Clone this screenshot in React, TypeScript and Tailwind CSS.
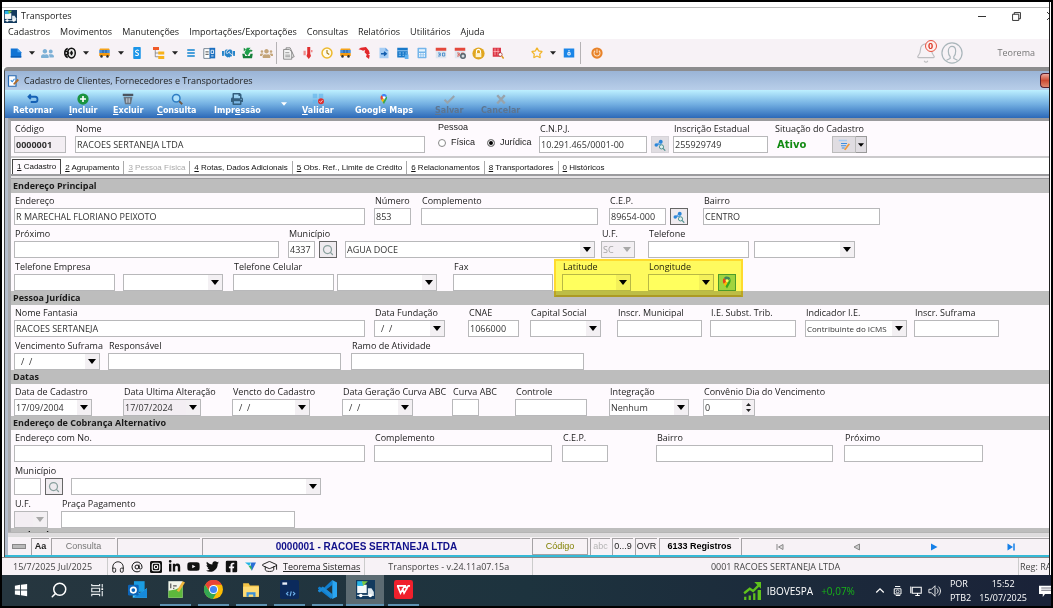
import React from 'react';
import { AtSign, Bell, GraduationCap, Headphones, Search, Star } from 'lucide-react';
import { FaFacebookSquare, FaHandshake, FaInstagram, FaLinkedinIn, FaPrint, FaTwitter, FaUserFriends, FaUsers, FaYoutube } from 'react-icons/fa';
import { clsx } from 'clsx';

type Kids = { children?: React.ReactNode };

/* ---------- shared icons ---------- */

const Arrow = ({ size = 'w-2 h-[5px]', className = 'text-black' }: { size?: string; className?: string }) => (
  <svg viewBox="0 0 10 6" className={clsx('shrink-0', size, className)} fill="currentColor">
    <path d="M0 0h10L5 6z" />
  </svg>
);

const Svg = ({ children, className = 'w-3 h-3' }: Kids & { className?: string }) => (
  <svg viewBox="0 0 16 16" className={clsx('shrink-0', className)} fill="none">
    {children}
  </svg>
);

const DocIcon = () => (
  <Svg>
    <path d="M1 2h9l5 5v7H1z" fill="#1173d4" />
    <path d="M10 2v5h5z" fill="#4da6f5" />
    <path d="M1 12h14v2H1z" fill="#0a5cb5" />
  </Svg>
);

const TireIcon = () => (
  <Svg>
    <ellipse cx="10" cy="8" rx="5" ry="6.5" fill="#eee" stroke="#111" strokeWidth="2" />
    <path d="M5 2C2 3 1 6 1 8s1 5 4 6M1.5 6h4M1.5 10h4M10 5v6M5 8h2" stroke="#111" strokeWidth="2" />
    <circle cx="10" cy="8" r="1.8" fill="#111" />
  </Svg>
);

const BusIcon = () => (
  <Svg className="w-[13px] h-3">
    <path d="M1 4h14v4H1z" fill="#4b8fd8" />
    <path d="M2 2h12l1 2H1z" fill="#f5a31b" />
    <path d="M1 8h14v4H1z" fill="#f39a12" />
    <path d="M6 4v4M10 4v4" stroke="#244d78" />
    <circle cx="4" cy="12.5" r="1.7" fill="#333" />
    <circle cx="12" cy="12.5" r="1.7" fill="#333" />
  </Svg>
);

const PhoneIcon = () => (
  <Svg>
    <rect x="3" y="0" width="10" height="16" rx="1" fill="#1b95e8" />
    <path d="M10.500 5C9 3.500 6 4 6 6s4 1.500 4 3.500S7 12 5.500 10.500" stroke="#fff" strokeWidth="1.400" />
  </Svg>
);

const TreeIcon = () => (
  <Svg>
    <path d="M3 4v9h6M3 8h6" stroke="#777" />
    <rect x="0" y="0" width="8" height="4" fill="#f05a28" />
    <rect x="7" y="6" width="8" height="4" fill="#f7b21b" />
    <rect x="7" y="12" width="8" height="4" fill="#f7b21b" />
  </Svg>
);

const ListIcon = () => (
  <Svg>
    <path d="M3 4h10M3 8h10M3 12h10" stroke="#1184d1" strokeWidth="2" />
  </Svg>
);

const ReportIcon = () => (
  <Svg className="w-[13px] h-[13px]">
    <path d="M1 2h8v12H1z" fill="#fff" stroke="#5c6f80" />
    <path d="M8 1h7v13H8z" fill="#1c6fc0" />
    <path d="M3 6h4M3 9h4" stroke="#222" />
    <path d="M10 4h3v4h-3zM10 11h3" stroke="#fff" />
  </Svg>
);

const TrayIcon = () => (
  <Svg className="w-[13px] h-3">
    <path d="M1 9h3l1 3h6l1-3h3l-1 6H2z" fill="#15803a" />
    <path d="M4 8 7 1h5l-2 3h3l-5 8z" fill="#1fa04b" />
    <path d="m3 1 3 2-3 3zM12 3l3 2-3 2z" fill="#1b8a3f" />
  </Svg>
);

const PaperIcon = () => (
  <Svg className="w-[13px] h-[13px]">
    <path d="M2 3h7l3 3v9H2zM5 3V1h5l5 11-3 1" fill="#f4f4f4" stroke="#777" />
    <path d="M4 7h5M4 10h6M4 12h6" stroke="#888" />
  </Svg>
);

const ThermoIcon = () => (
  <Svg>
    <path d="M7 0h4v9l1 3-3 4-3-4 1-3z" fill="#e02f2f" />
    <path d="M2 5h3v6H2zM12 4h2v3h-2z" fill="#f08a8a" />
  </Svg>
);

const ClockIcon = () => (
  <Svg>
    <circle cx="8" cy="8" r="6.600" fill="#fffbea" stroke="#edb92e" strokeWidth="2" />
    <path d="M8 4v4l3 2" stroke="#a67c10" strokeWidth="1.500" />
  </Svg>
);

const FuelIcon = () => (
  <Svg className="w-[13px] h-3">
    <path d="M0 3 3 1l7-1 4 5 1 4-3 2-4-4 1-3-3 1-2-1z" fill="#e2272b" />
    <path d="m11 10 4 1-1 5-4-3z" fill="#e2272b" />
  </Svg>
);

const PageArrowIcon = () => (
  <Svg>
    <path d="M2 1h8l4 4v10H2z" fill="#a6cdf4" />
    <path d="M10 1v4h4z" fill="#5d9de0" />
    <path d="M4 9h6M8 6.500 11 9l-3 2.500" stroke="#145fb0" strokeWidth="1.800" />
  </Svg>
);

const TableIcon = () => (
  <Svg className="w-[13px] h-3">
    <path d="M1 1h14v13H1z" fill="#1979c9" />
    <path d="M1 5h14M3 8h3M8 8h2M12 8h2M3 11h3M8 11h2" stroke="#bde0ff" />
    <path d="M11 10h5v6h-5z" fill="#5db0f0" />
  </Svg>
);

const CalcIcon = () => (
  <Svg>
    <rect x="2" y="1" width="12" height="14" rx="1" fill="#75b5ea" />
    <path d="M4 3h8v3H4z" fill="#e5f4ff" />
    <path d="M4 9h8M4 12h8" stroke="#fff" strokeWidth="1.800" strokeDasharray="2 1" />
  </Svg>
);

const CalendarIcon = ({ gear = false }: { gear?: boolean }) => (
  <Svg>
    <path d="M1 2h14v13H1z" fill="#dfe6ef" />
    <path d="M1 1h14v4H1z" fill="#e4483c" />
    <path d="M4 8h3v2H5m2 0v2H4M10 8h3v4h-3z" stroke={gear ? '#d0453a' : '#2878c0'} />
    {gear && <circle cx="12" cy="12" r="3" fill="#d5dde3" stroke="#56646e" strokeWidth="2" />}
  </Svg>
);

const LockIcon = () => (
  <Svg className="w-[13px] h-[13px]">
    <circle cx="8" cy="8" r="7.500" fill="#e0a620" />
    <path d="M5.500 8V5.500a2.500 2.500 0 0 1 5 0V8" stroke="#fff" strokeWidth="1.400" />
    <path d="M4.500 7.500h7v5h-7z" fill="#fff3cc" />
  </Svg>
);

const BookSearchIcon = () => (
  <Svg>
    <path d="M1 1h11v12H1z" fill="#dc3545" />
    <path d="M4 2v9M8 2v9M2 6h8" stroke="#ffb9be" />
    <circle cx="11" cy="10" r="2.500" fill="#fff" stroke="#a02b2b" />
    <path d="m13 12 2.500 3.500" stroke="#e09a23" strokeWidth="2" />
  </Svg>
);

const ContactIcon = () => (
  <Svg>
    <path d="M1 2h14v12H1z" fill="#1b86e8" />
    <path d="M8 4v2M6.500 7.500h3v3h-3z" stroke="#fff" strokeWidth="1.300" />
  </Svg>
);

const PowerIcon = () => (
  <Svg>
    <circle cx="8" cy="8" r="7.500" fill="#e8832a" />
    <path d="M5.500 5a4 4 0 1 0 5 0M8 3v5" stroke="#fbe0c4" strokeWidth="1.400" />
  </Svg>
);

const UserCircle = () => (
  <svg viewBox="0 0 24 24" className="w-[22px] h-[22px]" fill="none" stroke="#a9b5ba" strokeWidth="1.300">
    <circle cx="12" cy="12" r="11" />
    <path d="M8 10c0-7 8-7 8 0 0 3-1 5-2 6v2l4 2M8 10c0 3 1 5 2 6v2l-4 2" />
  </svg>
);

const TruckLogo = ({ className }: { className: string }) => (
  <Svg className={className}>
    <path d="M0 0h16v16H0z" fill="#123a5e" />
    <path d="M1 4h8v7H1z" fill="#f4f8fa" />
    <path d="M1 1h5v4H1z" fill="#27b5e8" />
    <path d="M5 1h5L6 5z" fill="#7ac943" />
    <path d="M10 7h3l2 3v3h-5z" fill="#dfe9ef" />
    <path d="M1 13h14" stroke="#cfdce4" />
    <circle cx="4" cy="13" r="1.500" fill="#fff" />
    <circle cx="12" cy="13" r="1.500" fill="#fff" />
  </Svg>
);

const MapsPin = ({ className = 'w-[10px] h-[12px]' }: { className?: string }) => (
  <Svg className={className}>
    <path d="M8 16 3.500 9.500 8 6z" fill="#fbbc04" />
    <path d="M3.500 9.500C2 7 2 4 4 2l4 4z" fill="#ea4335" />
    <path d="M4 2c2-3 7-2.500 8.500 1L8 6z" fill="#4285f4" />
    <path d="M12.500 3c1 3 0 5-1 6.500L8 16l-2-3z" fill="#34a853" />
    <circle cx="8" cy="5.500" r="1.900" fill="#fff" />
  </Svg>
);

const LookupIcon = () => (
  <Svg>
    <path d="M3 8l6-1 1-4M3 8l4-3" stroke="#5aa4e4" strokeWidth="1.600" />
    <circle cx="3" cy="8" r="2.300" fill="#2b86d9" />
    <circle cx="9" cy="3.500" r="2.600" fill="#2b86d9" />
    <circle cx="10" cy="10.500" r="2.800" stroke="#4d8f8d" strokeWidth="1.300" fill="#dff0f0" />
    <path d="m12 12.500 3 3" stroke="#4d8f8d" strokeWidth="1.600" />
  </Svg>
);

/* ---------- form controls ---------- */

interface FieldProps {
  id: string;
  label?: string;
  value?: string;
  w: string;
  kind?: 'text' | 'select' | 'date' | 'spin';
  muted?: boolean;
  disabled?: boolean;
  children?: React.ReactNode;
}

function Control({ id, label, value = '', w, kind = 'text', muted, disabled }: FieldProps) {
  const box = clsx('flex h-[17px] border border-[#b8b8ba]', w, muted || disabled ? 'bg-[#f3eef3]' : 'bg-white');
  const text = clsx('min-w-0 flex-1 bg-transparent outline-none leading-[15px]', disabled ? 'text-[#a5a5a5]' : 'text-[#333]');
  const name = label ?? id;

  if (kind === 'select') {
    return (
      <div className={clsx(box, 'relative')}>
        <select id={id} aria-label={name} disabled={disabled} defaultValue={value} className={clsx(text, 'appearance-none pl-px pr-4 opacity-100')}>
          <option>{value}</option>
        </select>
        <span className="pointer-events-none absolute inset-y-0 right-0 w-[14px] flex items-center justify-center bg-[#f3f0f3]">
          <Arrow className={disabled ? 'text-[#a8a8a8]' : 'text-black'} />
        </span>
      </div>
    );
  }
  if (kind === 'date') {
    return (
      <div className={box}>
        <input id={id} aria-label={name} defaultValue={value} className={clsx(text, value.startsWith('/') ? 'pl-1.5' : 'pl-px')} />
        <button aria-label={`Abrir ${name}`} className="w-[14px] flex items-center justify-center bg-[#f3f0f3]">
          <Arrow />
        </button>
      </div>
    );
  }
  if (kind === 'spin') {
    return (
      <div className={box}>
        <input id={id} aria-label={name} defaultValue={value} className={clsx(text, 'pl-px')} />
        <div className="w-3 flex flex-col items-center justify-evenly bg-[#f3f0f3]">
          <button aria-label="Aumentar"><Arrow size="w-[5px] h-[3px]" className="rotate-180 text-[#222]" /></button>
          <button aria-label="Diminuir"><Arrow size="w-[5px] h-[3px]" className="text-[#222]" /></button>
        </div>
      </div>
    );
  }
  return (
    <div className={box}>
      <input id={id} aria-label={name} defaultValue={value} className={clsx(text, 'pl-px')} />
    </div>
  );
}

function Field(props: FieldProps) {
  return (
    <div className="relative">
      <label htmlFor={props.id} className="block h-[15px] leading-[15px] pl-px whitespace-nowrap">
        {props.label}
      </label>
      <Control {...props} />
      {props.children}
    </div>
  );
}

const IconButton = ({ label, tone = 'light', children }: Kids & { label: string; tone?: 'light' | 'dark' | 'map' }) => (
  <div className="pt-[15px]">
    <button
      aria-label={label}
      className={clsx(
        'w-[18px] h-[17px] flex items-center justify-center border',
        tone === 'light' && 'border-[#d6d3d8] bg-[#e0dde2]',
        tone === 'dark' && 'border-[#666] bg-[#efebef]',
        tone === 'map' && 'border-[#4c9c70] bg-[#a0d4a8]',
      )}
    >
      {children}
    </button>
  </div>
);

const Magnifier = () => <Search className="w-3 h-3 text-[#8aa09e]" strokeWidth={2.5} />;

const SectionBar = ({ children }: Kids) => (
  <h2 className="h-[14px] leading-[14px] pl-0.5 bg-[#bdbdbd] font-bold text-[#1a1a1a] whitespace-nowrap">{children}</h2>
);

const Rows = ({ children }: Kids) => <div className="flex flex-col gap-px pl-[3px]">{children}</div>;

/* ---------- application chrome ---------- */

const ToolCell = ({ label, children }: Kids & { label: string }) => (
  <button aria-label={label} className="w-[19px] h-5 shrink-0 flex items-center justify-center">{children}</button>
);

const ToolDrop = () => (
  <button aria-label="Mais opções" className="w-[13px] h-5 shrink-0 flex items-center justify-center">
    <Arrow size="w-[6px] h-[4px]" className="text-[#222]" />
  </button>
);

const ToolSep = () => <span className="w-px h-[22px] bg-[#b5b2b5] shrink-0" />;

function MainToolbar() {
  return (
    <div className="h-7 flex items-center bg-[#f7f2f6] pl-1 text-[13px]">
      <div className="flex gap-[3px]">
        <div className="flex">
          <ToolCell label="Documento"><DocIcon /></ToolCell>
          <ToolDrop />
          <ToolCell label="Clientes"><FaUserFriends className="text-[#7db0d6]" /></ToolCell>
        </div>
        <div className="flex">
          <ToolCell label="Pneus"><TireIcon /></ToolCell>
          <ToolDrop />
        </div>
        <div className="flex">
          <ToolCell label="Veículos"><BusIcon /></ToolCell>
          <ToolDrop />
          <ToolCell label="Financeiro"><PhoneIcon /></ToolCell>
        </div>
        <div className="flex">
          <ToolCell label="Plano"><TreeIcon /></ToolCell>
          <ToolDrop />
          <ToolCell label="Lista"><ListIcon /></ToolCell>
          <ToolCell label="Razão"><ReportIcon /></ToolCell>
          <ToolCell label="Contratos"><FaHandshake className="text-[#2583c9]" /></ToolCell>
          <ToolCell label="Receber"><TrayIcon /></ToolCell>
          <ToolCell label="Equipe"><FaUsers className="text-[#c4a57a]" /></ToolCell>
        </div>
      </div>
      <ToolSep />
      <div className="flex pl-0.5">
        <ToolCell label="Nota"><PaperIcon /></ToolCell>
        <ToolCell label="Temperatura"><ThermoIcon /></ToolCell>
        <ToolCell label="Horários"><ClockIcon /></ToolCell>
        <ToolCell label="Frota"><BusIcon /></ToolCell>
        <ToolCell label="Abastecimento"><FuelIcon /></ToolCell>
        <ToolCell label="Exportar"><PageArrowIcon /></ToolCell>
        <ToolCell label="Tabela"><TableIcon /></ToolCell>
        <ToolCell label="Calculadora"><CalcIcon /></ToolCell>
        <ToolCell label="Calendário"><CalendarIcon /></ToolCell>
        <ToolCell label="Agenda"><CalendarIcon gear /></ToolCell>
        <ToolCell label="Bloqueio"><LockIcon /></ToolCell>
        <ToolCell label="Auditoria"><BookSearchIcon /></ToolCell>
      </div>
      <div className="flex ml-5 pr-0.5">
        <ToolCell label="Favoritos"><Star className="w-3 h-3 text-[#f2b52a]" strokeWidth={2.5} /></ToolCell>
        <ToolDrop />
        <ToolCell label="Contato"><ContactIcon /></ToolCell>
      </div>
      <ToolSep />
      <div className="ml-1.5"><ToolCell label="Sair"><PowerIcon /></ToolCell></div>
      <div className="ml-auto flex items-center pr-[14px] text-[9px] text-[#777]">
        <button aria-label="Notificações" className="relative mr-1">
          <Bell className="w-[22px] h-[22px] text-[#bdbdc0]" strokeWidth={1.3} />
          <span className="absolute -top-0.5 right-0 w-3 h-3 rounded-full border border-[#e8503f] bg-[#fdf0ee] text-[#dd3b2b] leading-[10px] font-bold">0</span>
        </button>
        <button aria-label="Usuário"><UserCircle /></button>
        <span className="ml-[35px]">Teorema</span>
      </div>
    </div>
  );
}

interface ActionProps {
  label: string;
  hot?: number;
  off?: boolean;
  icon: React.ReactNode;
}

function Action({ label, hot = -1, off, icon }: ActionProps) {
  return (
    <button disabled={off} className={clsx('justify-self-start flex flex-col items-center whitespace-nowrap', off ? 'text-[#5d7590]' : 'text-white')}>
      <span className="h-3 mt-[3px] flex items-center">{icon}</span>
      <span className="leading-[12px]">
        {hot < 0 ? label : (
          <>
            {label.slice(0, hot)}<u>{label[hot]}</u>{label.slice(hot + 1)}
          </>
        )}
      </span>
    </button>
  );
}

function ActionBar() {
  return (
    <div className="h-7 grid grid-cols-[56px_44px_44px_57px_61px_27px_53px_80px_46px_60px] pl-2 bg-linear-to-b from-[#bdf0ff] via-[#74b0e2] to-[#2c69b8] text-[8px] font-bold font-['DejaVu_Sans',sans-serif]">
      <Action label="Retornar" icon={<Svg><path d="M5 2 2 5l3 3M2 5h9c4 0 4 7 0 7H5" stroke="#1561b5" strokeWidth="2.400" /></Svg>} />
      <Action label="Incluir" hot={0} icon={<Svg><circle cx="8" cy="8" r="7.500" fill="#1a9440" /><path d="M8 4v8M4 8h8" stroke="#fff" strokeWidth="2.200" /></Svg>} />
      <Action label="Excluir" hot={0} icon={<Svg><path d="M1 1h14v3H1z" fill="#4b5560" /><path d="M2 5h12l-2 10H4z" fill="#6a7682" /><path d="M6 7v6M8 7v6M10 7v6" stroke="#c9d2da" /></Svg>} />
      <Action label="Consulta" hot={0} icon={<Svg><circle cx="7" cy="7" r="5" stroke="#2f7ec4" strokeWidth="2" fill="#aee0fb" /><path d="m11 11 4 4" stroke="#6e5a48" strokeWidth="2.400" /></Svg>} />
      <Action label="Impressão" hot={4} icon={<FaPrint className="text-[12px] text-[#35607f]" />} />
      <button aria-label="Opções de impressão" className="flex items-center pl-1.5"><Arrow size="w-[6px] h-[4px]" className="text-white" /></button>
      <Action label="Validar" hot={0} icon={<Svg><path d="M1 1h6v6H1zM9 1h6v6H9zM1 9h6v5H1z" fill="#5fb0ea" opacity=".6" /><circle cx="12" cy="11" r="4" fill="#dd3030" /><path d="m10 11 1.500 1.500L14 9.500" stroke="#fff" /></Svg>} />
      <Action label="Google Maps" icon={<MapsPin />} />
      <Action label="Salvar" hot={0} off icon={<Svg><path d="m2 9 4 4 9-9" stroke="#98a3ab" strokeWidth="2.800" /></Svg>} />
      <Action label="Cancelar" off icon={<Svg><path d="m3 3 10 11M13 3 3 14" stroke="#98a3ab" strokeWidth="3.200" /></Svg>} />
    </div>
  );
}

function RecordHeader() {
  return (
    <div className="h-[35px] grid grid-cols-[61px_363px_101px_112px_22px_102px_57px_40px] pl-[3px]">
      <Field id="codigo" label="Código" w="w-[52px] font-bold" value="0000001" muted />
      <Field id="nome" label="Nome" w="w-[350px]" value="RACOES SERTANEJA LTDA" />
      <fieldset className="font-['Liberation_Sans',sans-serif]">
        <legend className="h-3 leading-[12px]">Pessoa</legend>
        <div className="h-5 flex items-center gap-3">
          {['Física', 'Jurídica'].map((p) => (
            <label key={p} className="flex items-center gap-[5px]">
              <input
                type="radio"
                name="pessoa"
                defaultChecked={p === 'Jurídica'}
                className="appearance-none w-2 h-2 rounded-full border border-[#888] bg-white checked:bg-black checked:shadow-[inset_0_0_0_1px_white]"
              />
              {p}
            </label>
          ))}
        </div>
      </fieldset>
      <Field id="cnpj" label="C.N.P.J." w="w-[108px]" value="10.291.465/0001-00" />
      <IconButton label="Consultar CNPJ"><LookupIcon /></IconButton>
      <Field id="ie" label="Inscrição Estadual" w="w-[95px]" value="255929749" />
      <div>
        <div className="h-[15px] leading-[15px] whitespace-nowrap">Situação do Cadastro</div>
        <strong className="block pl-0.5 leading-[17px] text-[10px] text-[#128a12] font-['DejaVu_Sans',sans-serif]">Ativo</strong>
      </div>
      <div className="pt-[15px] flex">
        <button aria-label="Alterar situação" className="w-6 h-[17px] flex items-center justify-center border border-[#bbb] bg-[#e0dde2]">
          <Svg><path d="M1 2h11" stroke="#a9cdf2" strokeWidth="2" /><path d="M4 6h8M4 9h7M5 12h4" stroke="#3a8de0" strokeWidth="1.600" /><path d="m8 14 6-8 2 1-6 8z" fill="#f09a3a" /></Svg>
        </button>
        <button aria-label="Opções de situação" className="w-[11px] h-[17px] flex items-center justify-center border border-l-0 border-[#999] bg-[#e0dde2]">
          <Arrow size="w-[6px] h-[4px]" />
        </button>
      </div>
    </div>
  );
}

const TABS = [
  { key: '1', name: 'Cadastro' },
  { key: '2', name: 'Agrupamento' },
  { key: '3', name: 'Pessoa Física', off: true },
  { key: '4', name: 'Rotas, Dados Adicionais' },
  { key: '5', name: 'Obs. Ref., Limite de Crédito' },
  { key: '6', name: 'Relacionamentos' },
  { key: '8', name: 'Transportadores' },
  { key: '0', name: 'Históricos' },
];

function TabStrip() {
  return (
    <div role="tablist" className="h-[18px] flex items-end border-t-2 border-[#cbcacc] bg-white pl-px text-[8px] font-['Liberation_Sans',sans-serif] whitespace-nowrap">
      {TABS.map((t, i) => (
        <button
          key={t.key}
          role="tab"
          aria-selected={i === 0}
          disabled={t.off}
          className={clsx(
            'px-1',
            i === 0 ? 'h-[15px] border border-b-0 border-[#444] bg-[#fefafe]' : 'h-[13px]',
            i > 0 && i < TABS.length - 1 && 'border-r border-[#aaa]',
            t.off ? 'text-[#a9a9a9]' : 'text-[#111]',
          )}
        >
          <u>{t.key}</u> {t.name}
        </button>
      ))}
    </div>
  );
}

function FormBody() {
  return (
    <div className="flex-1 min-h-0 overflow-hidden">
      <SectionBar>Endereço Principal</SectionBar>
      <Rows>
        <div className="grid grid-cols-[360px_47px_188px_61px_33px_177px]">
          <Field id="endereco" label="Endereço" w="w-[351px]" value="R MARECHAL FLORIANO PEIXOTO" />
          <Field id="numero" label="Número" w="w-[37px]" value="853" />
          <Field id="complemento" label="Complemento" w="w-[177px]" />
          <Field id="cep" label="C.E.P." w="w-[57px]" value="89654-000" />
          <IconButton label="Consultar CEP" tone="dark"><LookupIcon /></IconButton>
          <Field id="bairro" label="Bairro" w="w-[177px]" value="CENTRO" />
        </div>
        <div className="grid grid-cols-[274px_31px_26px_256px_47px_106px_101px]">
          <Field id="proximo" label="Próximo" w="w-[265px]" />
          <Field id="municipio" label="Município" w="w-[27px]" value="4337" />
          <IconButton label="Pesquisar município" tone="dark"><Magnifier /></IconButton>
          <div className="pt-[15px]"><Control id="cidade" w="w-[250px]" kind="select" value="AGUA DOCE" /></div>
          <Field id="uf" label="U.F." w="w-[34px]" kind="select" value="SC" disabled />
          <Field id="telefone" label="Telefone" w="w-[101px]" />
          <div className="pt-[15px]"><Control id="tipo-telefone" w="w-[101px]" kind="select" /></div>
        </div>
        <div className="grid grid-cols-[109px_110px_104px_116px_109px_86px_70px_18px]">
          <Field id="tel-empresa" label="Telefone Empresa" w="w-[101px]" />
          <div className="pt-[15px]"><Control id="tipo-empresa" w="w-[100px]" kind="select" /></div>
          <Field id="tel-celular" label="Telefone Celular" w="w-[101px]" />
          <div className="pt-[15px]"><Control id="tipo-celular" w="w-[100px]" kind="select" /></div>
          <Field id="fax" label="Fax" w="w-[100px]" />
          <Field id="latitude" label="Latitude" w="w-[69px]" kind="date">
            {/* marker laid over the coordinates block */}
            <span className="pointer-events-none absolute z-10 -left-2 top-0 w-[189px] h-[38px] bg-[#ffff5e] border-2 border-[#ffe02e] border-b-[#e8d030] mix-blend-multiply" />
          </Field>
          <Field id="longitude" label="Longitude" w="w-[66px]" kind="date" />
          <IconButton label="Abrir no mapa" tone="map"><MapsPin className="w-3 h-[13px]" /></IconButton>
        </div>
      </Rows>

      <SectionBar>Pessoa Jurídica</SectionBar>
      <Rows>
        <div className="grid grid-cols-[360px_94px_62px_87px_93px_95px_109px_85px]">
          <Field id="fantasia" label="Nome Fantasia" w="w-[351px]" value="RACOES SERTANEJA" />
          <Field id="fundacao" label="Data Fundação" w="w-[71px]" kind="date" value="/  /" />
          <Field id="cnae" label="CNAE" w="w-[51px]" value="1066000" />
          <Field id="capital" label="Capital Social" w="w-[71px]" kind="date" />
          <Field id="insc-municipal" label="Inscr. Municipal" w="w-[85px]" />
          <Field id="ie-subst" label="I.E. Subst. Trib." w="w-[86px]" />
          <Field id="indicador" label="Indicador I.E." w="w-[102px] text-[8px]" kind="select" value="Contribuinte do ICMS" />
          <Field id="suframa" label="Inscr. Suframa" w="w-[85px]" />
        </div>
        <div className="grid grid-cols-[94px_243px_233px]">
          <Field id="venc-suframa" label="Vencimento Suframa" w="w-[86px]" kind="date" value="/  /" />
          <Field id="responsavel" label="Responsável" w="w-[233px]" />
          <Field id="ramo" label="Ramo de Atividade" w="w-[233px]" />
        </div>
      </Rows>

      <SectionBar>Datas</SectionBar>
      <Rows>
        <div className="grid grid-cols-[109px_109px_110px_110px_63px_94px_94px_52px]">
          <Field id="dt-cadastro" label="Data de Cadastro" w="w-[78px]" kind="date" value="17/09/2004" />
          <Field id="dt-alteracao" label="Data Ultima Alteração" w="w-[78px]" kind="date" value="17/07/2024" muted />
          <Field id="vencto" label="Vencto do Cadastro" w="w-[78px]" kind="date" value="/  /" />
          <Field id="dt-curva" label="Data Geração Curva ABC" w="w-[71px]" kind="date" value="/  /" />
          <Field id="curva" label="Curva ABC" w="w-[27px]" />
          <Field id="controle" label="Controle" w="w-[72px]" />
          <Field id="integracao" label="Integração" w="w-[80px]" kind="select" value="Nenhum" />
          <Field id="convenio" label="Convênio Dia do Vencimento" w="w-[52px]" kind="spin" value="0" />
        </div>
      </Rows>

      <SectionBar>Endereço de Cobrança Alternativo</SectionBar>
      <Rows>
        <div className="grid grid-cols-[360px_188px_94px_188px_139px]">
          <Field id="cob-endereco" label="Endereço com No." w="w-[351px]" />
          <Field id="cob-complemento" label="Complemento" w="w-[178px]" />
          <Field id="cob-cep" label="C.E.P." w="w-[46px]" />
          <Field id="cob-bairro" label="Bairro" w="w-[177px]" />
          <Field id="cob-proximo" label="Próximo" w="w-[139px]" />
        </div>
        <div className="grid grid-cols-[31px_26px_250px]">
          <Field id="cob-municipio" label="Município" w="w-[27px]" />
          <IconButton label="Pesquisar município de cobrança" tone="dark"><Magnifier /></IconButton>
          <div className="pt-[15px]"><Control id="cob-cidade" w="w-[250px]" kind="select" /></div>
        </div>
        <div className="grid grid-cols-[47px_234px]">
          <Field id="cob-uf" label="U.F." w="w-[34px]" kind="select" disabled />
          <Field id="praca" label="Praça Pagamento" w="w-[234px]" />
        </div>
      </Rows>
      <SectionBar>Dados do Contato</SectionBar>
    </div>
  );
}

const StatusCell = ({ className, children }: Kids & { className: string }) => (
  <div className={clsx('h-[17px] leading-[15px] border-t border-l border-[#a5a2a5] text-center whitespace-nowrap overflow-hidden', className)}>
    {children}
  </div>
);

function RecordStatus() {
  return (
    <div className="h-[19px] flex items-center gap-0.5 bg-[#f7f2f6] border-t border-[#dcdcdc] font-['Liberation_Sans',sans-serif]">
      <div className="w-[21px] flex justify-center"><span className="w-[14px] h-[5px] border border-[#888] bg-[#b9b9b9]" /></div>
      <StatusCell className="w-[18px] font-bold">Aa</StatusCell>
      <StatusCell className="w-16 text-[#777]">Consulta</StatusCell>
      <StatusCell className="w-[83px]" />
      <StatusCell className="flex-1 text-[10px] font-bold text-[#10108a]">0000001 - RACOES SERTANEJA LTDA</StatusCell>
      <StatusCell className="w-14 border-r border-b text-[#808000]">Código</StatusCell>
      <StatusCell className="w-5 text-[#b5b5b5]">abc</StatusCell>
      <StatusCell className="w-[21px]">0...9</StatusCell>
      <StatusCell className="w-[22px]">OVR</StatusCell>
      <StatusCell className="w-20 font-bold text-black">6133 Registros</StatusCell>
      <StatusCell className="w-[308px]">
        <div className="h-full grid grid-cols-4 place-items-center">
          <button aria-label="Primeiro"><Svg className="w-[10px] h-2"><path d="M2 2v12" stroke="#888" strokeWidth="2" /><path d="M14 3v10L5 8z" fill="#ddd" stroke="#888" strokeWidth="2" /></Svg></button>
          <button aria-label="Anterior"><Svg className="w-2 h-2"><path d="M13 2v12L2 8z" fill="#ccc" stroke="#888" strokeWidth="2" /></Svg></button>
          <button aria-label="Próximo"><Svg className="w-2 h-2"><path d="M2 1v14l13-7z" fill="#1580e8" /></Svg></button>
          <button aria-label="Último"><Svg className="w-[10px] h-2"><path d="M1 1v14l11-7z" fill="#1580e8" /><path d="M14 1v14" stroke="#1580e8" strokeWidth="3" /></Svg></button>
        </div>
      </StatusCell>
    </div>
  );
}

function AppStatus() {
  const social = [
    { name: 'Suporte', icon: <Headphones className="w-[14px] h-[14px]" strokeWidth={1.5} /> },
    { name: 'E-mail', icon: <AtSign className="w-3 h-3" /> },
    { name: 'Instagram', icon: <Svg><rect width="16" height="16" rx="2" fill="#111" /><rect x="3" y="3" width="10" height="10" rx="2" stroke="#fff" strokeWidth="1.500" /><circle cx="8" cy="8" r="2.300" stroke="#fff" strokeWidth="1.500" /></Svg> },
    { name: 'LinkedIn', icon: <FaLinkedinIn /> },
    { name: 'YouTube', icon: <FaYoutube /> },
    { name: 'Twitter', icon: <FaTwitter /> },
    { name: 'Facebook', icon: <FaFacebookSquare /> },
    { name: 'Teorema', icon: <Svg className="w-[11px] h-[11px]"><path d="M0 2h9l-3 5z" fill="#22b5e6" /><path d="M9 2h7l-6 12-2-6z" fill="#2a6fd6" /><path d="M5 7h4l1 7z" fill="#2fb457" /></Svg> },
    { name: 'Treinamentos', icon: <GraduationCap className="w-[17px] h-[17px]" strokeWidth={1.3} /> },
  ];
  return (
    <div className="h-[18px] flex items-center bg-[#f7f2f6] border-t border-[#888] text-[#444] whitespace-nowrap">
      <div className="w-[106px] h-full pl-[11px] leading-[17px] border-r border-[#ccc]">15/7/2025 Jul/2025</div>
      <div className="flex text-[13px] text-[#111]">
        {social.map((s) => (
          <button key={s.name} aria-label={s.name} className="w-[19px] flex items-center justify-center">{s.icon}</button>
        ))}
      </div>
      <a href="#teorema" className="px-1 underline text-[#222]">Teorema Sistemas</a>
      <div className="w-[169px] h-full leading-[17px] text-center border-x border-[#ccc]">Transportes - v.24.11a07.15a</div>
      <div className="flex-1 text-center">0001 RACOES SERTANEJA LTDA</div>
      <div className="w-[31px] h-full pl-px leading-[17px] border-l border-[#ccc] overflow-hidden">Reg: RA</div>
    </div>
  );
}

const TaskCell = ({ label, open, active, children }: Kids & { label: string; open?: boolean; active?: boolean }) => (
  <button aria-label={label} className={clsx('w-[38px] h-full flex flex-col items-center', active && 'bg-[#5c6b72]')}>
    <span className="flex-1 flex items-center">{children}</span>
    <span className={clsx('h-0.5', active ? 'w-full' : 'w-[31px]', open ? 'bg-[#5f93b3]' : 'bg-transparent')} />
  </button>
);

function Taskbar() {
  return (
    <div className="h-[31px] flex items-center shrink-0 overflow-hidden bg-linear-to-r from-[#26363f] via-[#1d333e] to-[#1a2238] text-white">
      <div className="flex h-full gap-0.5">
        <div className="flex h-full">
          <TaskCell label="Iniciar"><Svg className="w-[14px] h-[14px]"><path d="M1 3l6-1v5.500H1zM8 2l7-1v6.500H8zM1 8.500h6V14l-6-1zM8 8.500h7V15l-7-1z" fill="#fff" /></Svg></TaskCell>
          <TaskCell label="Pesquisar"><Search className="w-[18px] h-[18px] -scale-x-100" strokeWidth={2} /></TaskCell>
          <TaskCell label="Visão de tarefas"><Svg className="w-[14px] h-[14px]"><path d="M2 1v2h9V1M2 6h9v4H2zM2 15v-2h9v2M14 1v4M14 9v6" stroke="#e5eaec" strokeWidth="1.300" /><path d="M13 6h2v2h-2z" fill="#fff" /></Svg></TaskCell>
        </div>
        <div className="flex h-full">
          <TaskCell label="Outlook"><Svg className="w-[19px] h-[19px]"><path d="M5 1h9v9H5z" fill="#1b9de2" /><path d="M4 7l6 4 6-4v8H4z" fill="#50d0ff" /><path d="M4 15 16 7v8z" fill="#168adb" /><rect x="0" y="4" width="9" height="9" rx="1" fill="#0c64b8" /><circle cx="4.500" cy="8.500" r="2.300" stroke="#fff" strokeWidth="1.400" /></Svg></TaskCell>
          <TaskCell label="Bloco de notas" open><Svg className="w-[19px] h-[19px]"><path d="M2 1h12v14H2z" fill="#f1f5ea" /><path d="M2 9l6-1 6-3v10H2z" fill="#5db83c" /><path d="M4 3v4M6 5h3M6 7h1" stroke="#555" /><path d="m9 9 5-8 2 1-5 8z" fill="#f0b63b" /></Svg></TaskCell>
          <TaskCell label="Chrome" open><Svg className="w-[19px] h-[19px]"><circle cx="8" cy="8" r="8" fill="#fbbc05" /><path d="M1 4a8 8 0 0 1 14 0H8L5 9.500z" fill="#ea4335" /><path d="M1 4a8 8 0 0 0 6.500 12L11 10l-6.500-.5z" fill="#34a853" /><circle cx="8" cy="8" r="3.800" fill="#fff" /><circle cx="8" cy="8" r="3" fill="#4285f4" /></Svg></TaskCell>
          <TaskCell label="Explorador" open><Svg className="w-[18px] h-[18px]"><path d="M1 2h5l1 2h8v10H1z" fill="#f5c445" /><path d="M1 5h14v9H1z" fill="#ffdc74" /><path d="M4 14v-4h8v4h-2v-2H6v2z" fill="#3a8fd8" /></Svg></TaskCell>
          <TaskCell label="Terminal" open><Svg className="w-[19px] h-[19px]"><rect width="16" height="16" rx="1.500" fill="#0b2a5c" /><path d="M2 2h4v2H2z" fill="#e8eef8" /><path d="m7 10-1.500 1.500L7 13M11 10l1.500 1.500L11 13M9.500 9.500l-1 4" stroke="#6fb2ea" /></Svg></TaskCell>
          <TaskCell label="VS Code" open><Svg className="w-[19px] h-[19px]"><path d="M12 0 4 7.500 1.500 5.500 0 6.500v.8L11 16V11.500L7 8l5-3.800z" fill="#0f7fd0" /><path d="M12 16 4 8.500l-2.500 2L0 9.500v-.8L4 5.500 12 11.800z" fill="#1b8ad6" /><path d="m12 0 4 2v12l-4 2z" fill="#2aa6f2" /></Svg></TaskCell>
          <TaskCell label="Transportes" open active><TruckLogo className="w-[19px] h-[19px]" /></TaskCell>
          <TaskCell label="WPS" open><Svg className="w-[19px] h-[19px]"><rect width="16" height="16" rx="2" fill="#f0202c" /><path d="M2.500 5H9l-3.500 6L3 5M7 7l1.500 4L12 5h1.500M9.500 5 11 8" stroke="#fff" strokeWidth="1.400" /></Svg></TaskCell>
        </div>
      </div>
      <div className="ml-auto flex items-center text-[9px] leading-[14px] whitespace-nowrap">
        <Svg className="w-[18px] h-[18px]"><path d="M1 13h2v3H1zM5 12h2v4H5zM9 10h2v6H9zM13 7h3v9h-3z" fill="#5fc21c" /><path d="m1 10 5-4 3 2 5-5" stroke="#5fc21c" strokeWidth="2" /><path d="M10 0h6v6z" fill="#5fc21c" /></Svg>
        <span className="ml-1.5 text-[10px]">IBOVESPA</span>
        <span className="ml-2 text-[10px] text-[#18b418]">+0,07%</span>
        <div className="ml-[19px] mr-2 flex items-center gap-1.5">
          <Svg><path d="m3 10 5-5 5 5" stroke="#fff" strokeWidth="1.600" /></Svg>
          <Svg><path d="M3 5h9v7H3zM4 2h7M5 14h6" stroke="#fff" strokeWidth="1.300" /><circle cx="7.500" cy="8.500" r="2" stroke="#fff" /></Svg>
          <Svg><path d="M3 3h12v8H3zM7 14h6M10 11v3M1 2v9" stroke="#fff" strokeWidth="1.400" /></Svg>
          <Svg className="w-[14px] h-[14px]"><path d="M1 6h3l4-4v12l-4-4H1zM10 5c2 2 2 4 0 6M12 3c3 3 3 7 0 10" stroke="#fff" /></Svg>
        </div>
        <div>POR<br />PTB2</div>
        <div className="ml-2 text-center">15:52<br />15/07/2025</div>
        <Svg className="w-3 h-[18px] ml-3"><path d="M0 1h16v11H8l-3 4v-4H0z" fill="#fff" /><path d="M3 4h13M3 7h13" stroke="#445" /></Svg>
      </div>
    </div>
  );
}

const MENU = ['Cadastros', 'Movimentos', 'Manutenções', 'Importações/Exportações', 'Consultas', 'Relatórios', 'Utilitários', 'Ajuda'];

export default function App() {
  return (
    <div className="h-screen w-full overflow-hidden flex flex-col bg-white border-2 border-black text-[9px] text-[#222] font-['Open_Sans',sans-serif]">
      <div className="flex-1 min-h-0 flex flex-col pt-[5px] mr-px border-r border-[#222]">
        <header className="h-[17px] flex items-center pl-0.5 border-t border-[#bbb]">
          <TruckLogo className="w-[13px] h-[13px]" />
          <span className="ml-1">Transportes</span>
          <div className="ml-auto flex items-center gap-[26px]">
            <button aria-label="Minimizar"><span className="block w-2 h-px bg-[#333]" /></button>
            <button aria-label="Restaurar"><Svg className="w-[9px] h-[9px]"><path d="M1 4h11v11H1zM4 4V1h11v11h-3" stroke="#222" strokeWidth="1.600" /></Svg></button>
            <button aria-label="Fechar">
              <svg viewBox="0 0 2 8" className="w-0.5 h-2" fill="none" stroke="#333"><path d="m0 0 2 2M0 8l2-2" /></svg>
            </button>
          </div>
        </header>
        <nav className="h-[15px] flex items-center gap-2.5 pl-1.5">
          {MENU.map((m) => <button key={m}>{m}</button>)}
        </nav>
        <MainToolbar />

        <div className="flex-1 min-h-0 flex flex-col ml-0.5 border-t-4 border-l border-t-[#8c8c8e] border-l-[#444] rounded-tl">
          <div className="h-[19px] flex items-center pl-0.5 bg-linear-to-b from-[#9ab4d6] to-[#b8cee9]">
            <Svg><path d="M2 1h10v14H2z" fill="#fff" stroke="#2668b0" strokeWidth="1.600" /><path d="m5 7 2 2 3-4" stroke="#2e8ae0" strokeWidth="1.500" /><path d="m8 12 6-7 2 2-6 6z" fill="#b06b2a" /></Svg>
            <span className="ml-[5px]">Cadastro de Clientes, Fornecedores e Transportadores</span>
            <button aria-label="Fechar cadastro" className="ml-auto w-[9px] h-[15px] rounded-l-sm border border-r-0 border-[#5a2030] bg-linear-to-b from-[#e9a79c] via-[#cc4b33] to-[#dd8870]" />
          </div>
          <ActionBar />
          <main className="flex-1 min-h-0 flex flex-col border-l-3 border-[#b3bccb] bg-[#fefafe]">
            <div className="flex-1 min-h-0 flex flex-col border-l-3 border-l-[#a9a9ac] border-t-3 border-t-[#9b9b9e]">
              <RecordHeader />
              <TabStrip />
              <div className="h-[5px] shrink-0 border-t-2 border-b border-[#9b9b9e] bg-[#e6e4e6]" />
              <FormBody />
            </div>
            <div className="h-1 shrink-0 bg-[#dedcde] border-t border-[#b5b5b5]" />
            <RecordStatus />
          </main>
          <div className="h-0.5 shrink-0 bg-[#35b9d6]" />
        </div>
        <AppStatus />
      </div>
      <Taskbar />
    </div>
  );
}
